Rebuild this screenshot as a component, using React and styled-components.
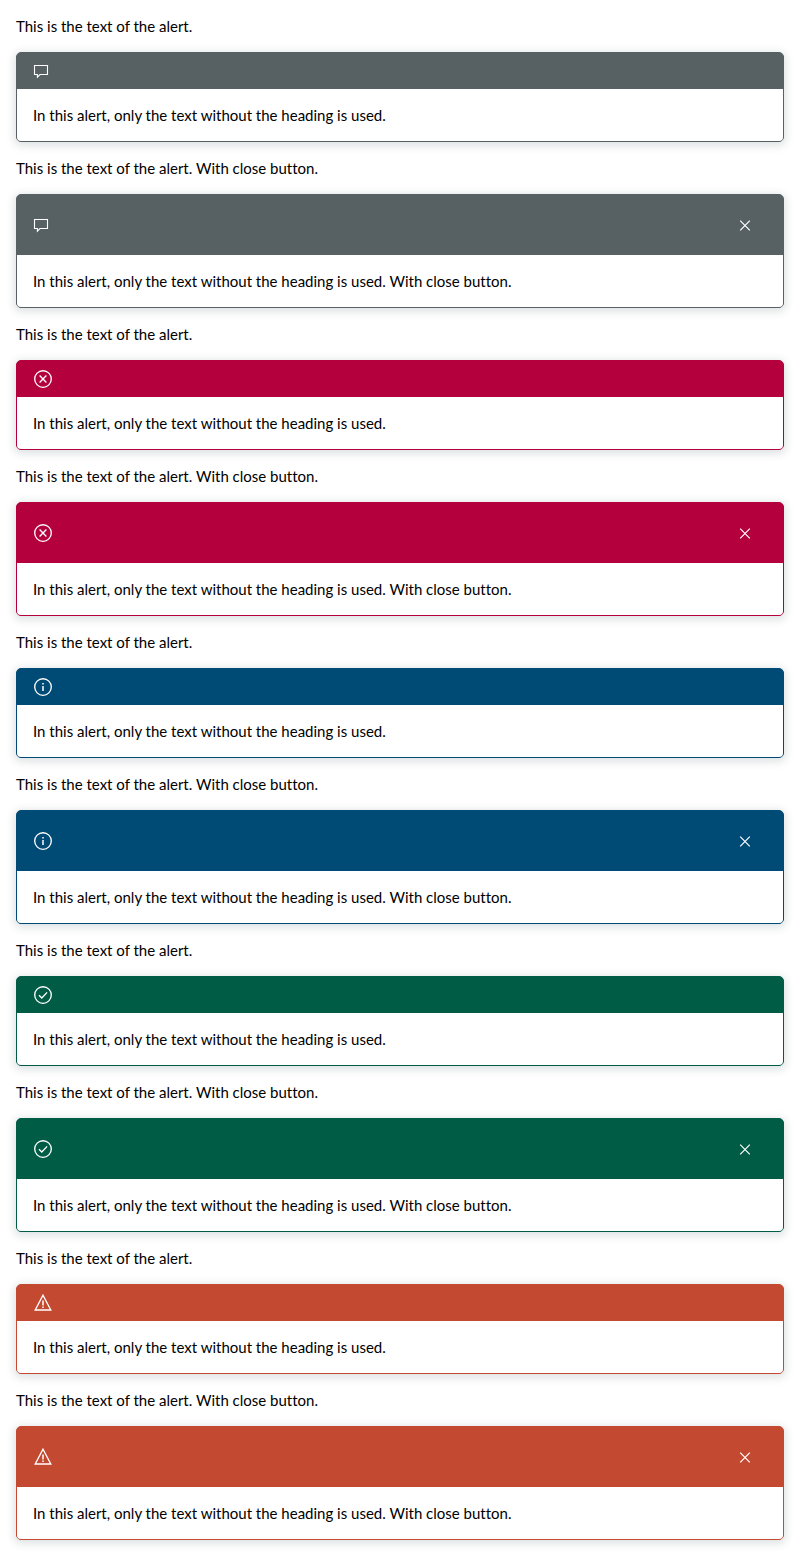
import React from "react";
import styled, { createGlobalStyle } from "styled-components";

const GlobalStyle = createGlobalStyle`
  *, *::before, *::after { box-sizing: border-box; }
  body {
    margin: 0;
    background: #fff;
    color: #000;
    font: 15px/20px Lato, "Noto Sans", sans-serif;
    font-variant-ligatures: none;
  }
`;

const Page = styled.main`
  display: flex;
  flex-direction: column;
  gap: 16px;
  padding: 16px;
`;

const Message = styled.p`
  margin: 0;
`;

const Card = styled.section`
  border: 1px solid ${(p) => p.$color};
  border-radius: 5px;
  background: ${(p) => p.$color};
  box-shadow: 0 2px 8px 2px rgba(8, 35, 48, 0.13);
`;

const CardHeader = styled.header`
  display: flex;
  align-items: center;
  justify-content: space-between;
  padding: 8px 16px;
  color: #fff;
`;

const CardBody = styled.div`
  padding: 16px;
  border-radius: 0 0 4px 4px;
  background: #fff;
`;

const CloseButton = styled.button`
  display: flex;
  align-items: center;
  justify-content: center;
  width: 44px;
  height: 44px;
  padding: 0;
  border: 0;
  background: transparent;
  color: inherit;
  cursor: pointer;
`;

const Icon = styled.svg`
  display: block;
  width: 20px;
  height: 20px;
  fill: none;
  stroke: currentColor;
  stroke-width: 1.35;
`;

const shapes = {
  message: <path strokeWidth="1.1" d="M1.5 4.5h13v9H7l-2.6 2.6v-2.6H1.5z" />,
  error: (
    <>
      <circle cx="10" cy="10" r="8.3" />
      <path d="M6.6 6.6l6.8 6.8M13.4 6.6l-6.8 6.8" />
    </>
  ),
  info: (
    <>
      <circle cx="10" cy="10" r="8.3" />
      <path strokeWidth="1.5" d="M10 9v5M10 6v1.6" />
    </>
  ),
  success: (
    <>
      <circle cx="10" cy="10" r="8.3" />
      <path d="M6 10.2l2.8 2.8 5.3-5.6" />
    </>
  ),
  warning: (
    <>
      <path d="M10 2.2L17.8 17H2.2z" />
      <path strokeWidth="1.5" d="M10 7.5v5M10 13.4v1.5" />
    </>
  ),
  close: <path strokeWidth="1.2" d="M5.2 5.7l9.6 9.6M14.8 5.7l-9.6 9.6" />,
};

const kinds = [
  { icon: "message", color: "#576164" },
  { icon: "error", color: "#b4003c" },
  { icon: "info", color: "#004b76" },
  { icon: "success", color: "#005c45" },
  { icon: "warning", color: "#c44931" },
];

function Glyph({ name }) {
  return (
    <Icon viewBox="0 0 20 20" aria-hidden="true">
      {shapes[name]}
    </Icon>
  );
}

function Alert({ icon, color, closable }) {
  const suffix = closable ? " With close button." : "";
  return (
    <>
      <Message>This is the text of the alert.{suffix}</Message>
      <Card $color={color} role="alert">
        <CardHeader>
          <Glyph name={icon} />
          {closable && (
            <CloseButton type="button" aria-label="Close">
              <Glyph name="close" />
            </CloseButton>
          )}
        </CardHeader>
        <CardBody>
          In this alert, only the text without the heading is used.{suffix}
        </CardBody>
      </Card>
    </>
  );
}

export default function App() {
  return (
    <>
      <GlobalStyle />
      <Page>
        {kinds.map((kind) => (
          <React.Fragment key={kind.icon}>
            <Alert {...kind} />
            <Alert {...kind} closable />
          </React.Fragment>
        ))}
      </Page>
    </>
  );
}
